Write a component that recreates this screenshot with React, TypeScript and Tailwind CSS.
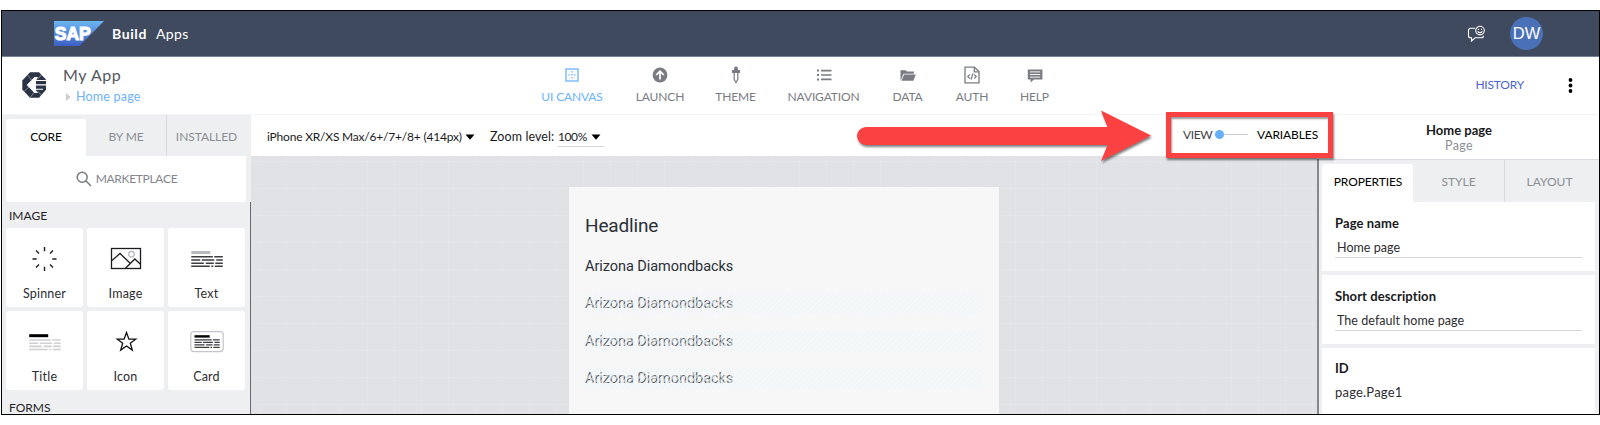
import React from "react";

const navItems = [
  { label: "UI CANVAS", w: "w-[62px]", gap: "ml-0", icon: "canvas", active: true },
  { label: "LAUNCH", w: "w-[48px]", gap: "ml-[33px]", icon: "launch" },
  { label: "THEME", w: "w-[39px]", gap: "ml-[32px]", icon: "theme" },
  { label: "NAVIGATION", w: "w-[71px]", gap: "ml-[33px]", icon: "nav" },
  { label: "DATA", w: "w-[31px]", gap: "ml-[33px]", icon: "data" },
  { label: "AUTH", w: "w-[32px]", gap: "ml-[33px]", icon: "auth" },
  { label: "HELP", w: "w-[29px]", gap: "ml-[32px]", icon: "help" },
];

function NavIcon({ name }: { name: string }) {
  return (
    <svg className="block h-[20px] w-[20px] shrink-0" viewBox="0 0 20 20" fill="none">
      {name === "canvas" && (
        <g stroke="currentColor">
          <rect x="4" y="4" width="12" height="12" strokeWidth="1.3" />
          <path d="M10 6v8.500M6 10h8.500" strokeWidth="1.2" strokeDasharray="1.500 1.500" />
          <path d="M7.500 6.500v7M12.500 6.500v7" strokeWidth=".4" strokeDasharray="1 2" />
        </g>
      )}
      {name === "launch" && (
        <g>
          <circle cx="10" cy="10" r="7.4" fill="currentColor" />
          <path d="M10 14.500V7M6.200 10 10 6.300l3.800 3.700" stroke="#fff" strokeWidth="1.7" />
        </g>
      )}
      {name === "theme" && (
        <g>
          <path d="M8 5V3.500a2 2 0 0 1 4 0V5h2v3H6V5z" fill="currentColor" />
          <path d="M8.200 8v6.500l1.800 3 1.800-3V8" stroke="currentColor" strokeWidth="1.2" />
        </g>
      )}
      {name === "nav" && (
        <path
          fill="currentColor"
          d="M3 4.600h2v2H3zM3 9h2v2H3zM3 13.400h2v2H3zM7 4.800h10.500v1.700H7zM7 9.200h10.500v1.600H7zM7 13.500h10.500v1.700H7z"
        />
      )}
      {name === "data" && (
        <g fill="currentColor">
          <path d="M2.500 5.200h5.200l1.200 1.400h7v2.200H5.600l-2.600 6h-.5z" />
          <path d="M6.200 9.600h11.600l-2.400 6.200H3.400z" />
        </g>
      )}
      {name === "auth" && (
        <g stroke="currentColor" strokeWidth="1.3">
          <path d="M3 2.200h9.500L17 6.600v11.200H3z" />
          <path d="M12.300 2.200v4.600H17" />
          <path d="m7.800 9.300-2 2.200 2 2.200M12.200 9.300l2 2.200-2 2.200M10.900 8.300l-1.800 6.300" strokeWidth="1.200" />
        </g>
      )}
      {name === "help" && (
        <g>
          <path d="M2.800 4.600h14.600v10H9l-3.400 2.800v-2.800H2.800z" fill="currentColor" />
          <path d="M5 6.900h10.200M5 9.500h10.200M5 12.100h10.200" stroke="#fff" strokeWidth=".9" />
        </g>
      )}
    </svg>
  );
}

function TextLines({ title, body }: { title: string; body: string }) {
  return (
    <g>
      <rect x="0" y="0" width="19" height="3" fill={title} />
      <g stroke={body} strokeWidth="1.6">
        <path d="M0 5.800h21.500M23 5.800h8.500" />
        <path d="M0 9h9M10.500 9H23M25 9h6.500" />
        <path d="M0 12.200h12.500M14.500 12.200h8M24 12.200h7.500" />
        <path d="M0 15.300h18.500M20 15.300h2M23.500 15.300h8" />
      </g>
    </g>
  );
}

const components = [
  {
    label: "Spinner",
    icon: (
      <path
        stroke="#1c1c1e"
        strokeWidth="1.4"
        d="M19.500 3v4.200M19.500 22.800V27M7.500 15h4.200M27.300 15h4.200M11 6.500l3 3M28 6.500l-3 3M11 23.500l3-3M28 23.500l-3-3"
      />
    ),
  },
  {
    label: "Image",
    icon: (
      <g stroke="#1c1c1e" strokeWidth="1.3" fill="none">
        <rect x="5.500" y="4.500" width="29" height="20" />
        <circle cx="25.500" cy="10.300" r="2.800" stroke="#b9babd" />
        <path d="m6 16.500 8-7 10.500 10M19.500 24.200l9.300-9.200 5.400 5" />
      </g>
    ),
  },
  {
    label: "Text",
    icon: (
      <g transform="translate(4.3 7)">
        <TextLines title="#b9babd" body="#3d3d40" />
      </g>
    ),
  },
  {
    label: "Title",
    icon: (
      <g transform="translate(4.2 7.2)">
        <TextLines title="#000" body="#cfd0d2" />
      </g>
    ),
  },
  {
    label: "Icon",
    icon: (
      <path
        d="m20.500 5.500 2.400 6.700h6.800l-5.400 4.100 2 6.800-5.800-4.100-5.800 4.100 2-6.800-5.400-4.100h6.800z"
        fill="none"
        stroke="#111"
        strokeWidth="1.3"
      />
    ),
  },
  {
    label: "Card",
    icon: (
      <g>
        <rect x="3.800" y="4.600" width="32.400" height="20" rx="3" fill="none" stroke="#c3c5cb" strokeWidth="1.200" />
        <g transform="translate(7.5 8.2) scale(.8)">
          <TextLines title="#000" body="#3d3d40" />
        </g>
      </g>
    ),
  },
];

const Caret = () => (
  <svg className="block h-[6px] w-[10px]" viewBox="0 0 10 6">
    <path d="M.5.500h9L5 5.800z" fill="#000" />
  </svg>
);

function Header() {
  return (
    <header className="flex h-[46px] shrink-0 items-center border-b border-[#76829a] bg-[#3f4a5f] pl-[52px] pr-[56px] text-white">
      <svg className="block h-[25px] w-[50px]" viewBox="0 0 50 25">
        <defs>
          <linearGradient id="sap" x1="0" y1="0" x2="0" y2="1">
            <stop offset="0" stopColor="#6cb6f3" />
            <stop offset="1" stopColor="#3c5fc4" />
          </linearGradient>
        </defs>
        <path d="M0 0h50L25.500 25H0z" fill="url(#sap)" />
        <text
          x="0.800"
          y="19"
          fill="#fff"
          fontFamily="Liberation Sans"
          fontWeight="700"
          fontSize="19"
          textLength="36"
          lengthAdjust="spacingAndGlyphs"
          stroke="#fff"
          strokeWidth="1.2"
        >
          SAP
        </text>
      </svg>
      <div className="ml-[8px] flex items-center text-[14px]">
        <span className="font-bold tracking-[0.6px]">Build</span>
        <span className="ml-[9px] tracking-[0.4px]">Apps</span>
      </div>
      <svg className="ml-auto block h-[17px] w-[19px]" viewBox="0 0 19 17" fill="none" stroke="#fff" strokeWidth="1.1">
        <path d="M8 3.200H3.500a2 2 0 0 0-2 2v5.600a2 2 0 0 0 2 2h1V16l3.600-3.200h6.400a2 2 0 0 0 2-2" />
        <circle cx="13" cy="5.600" r="4.300" />
        <path d="M10.700 6.300c.8 2 3.800 2 4.600 0" />
        <path d="M11.500 3.700v1.300M14.500 3.700v1.300" />
      </svg>
      <div className="ml-[24px] flex h-[33px] w-[33px] items-center justify-center rounded-full bg-[#4a70b8] font-['Liberation_Sans'] text-[16.500px]">
        DW
      </div>
    </header>
  );
}

function Toolbar() {
  return (
    <div className="flex h-[58px] shrink-0 items-start border-b border-[#f3f3f5] bg-white">
      <svg className="ml-[20px] mt-[15px] block h-[26px] w-[25px]" viewBox="0 0 25 26">
        <path d="M8 .3h9L24 7.500v10.300l-7 7.900H8L.3 17.500v-9z" fill="#2a3446" />
        <path d="M12.500 4.900 16 4.900 14 8.800v9.800l2 2.300h-3.500L4.700 13z" fill="#fff" />
        <path d="M12.500 8.500H25M13.500 12.900H25M13.500 17.300H21" stroke="#fff" strokeWidth="1.100" />
        <path
          d="M5.600 3l4 5M2.200 19.500l4.500-4.500M19.500 2.800l-4 4.500M8.500 25l4-5M19.800 23.500l-4.800-5"
          stroke="#fff"
          strokeWidth=".6"
          strokeOpacity=".7"
        />
      </svg>
      <div className="ml-[16px] w-[478px] pt-[8px]">
        <div className="text-[16px] leading-[20px] tracking-[0.6px] text-[#55575e]">My App</div>
        <div className="mt-[3px] flex items-center">
          <svg className="ml-[3px] block h-[8px] w-[5px]" viewBox="0 0 5 8">
            <path d="M0 0v8l4.500-4z" fill="#c9cbd0" />
          </svg>
          <span className="ml-[5px] text-[12.500px] leading-[18px] tracking-[0.2px] text-[#6cb2fb]">Home page</span>
        </div>
      </div>
      <nav className="flex pt-[8px]">
        {navItems.map((n) => (
          <div
            key={n.label}
            className={`flex flex-col items-center ${n.w} ${n.gap} ${n.active ? "text-[#6cb2fb]" : "text-[#797c83]"}`}
          >
            <NavIcon name={n.icon} />
            <span className="mt-[4px] whitespace-nowrap text-[12px] leading-[16px] tracking-[-0.15px]">{n.label}</span>
          </div>
        ))}
      </nav>
      <span className="ml-auto mt-[20px] text-[12px] leading-[16px] tracking-[-0.2px] text-[#4c63cf]">HISTORY</span>
      <svg className="ml-[44px] mr-[26px] mt-[20px] block h-[17px] w-[5px]" viewBox="0 0 5 17">
        <circle cx="2.500" cy="3" r="1.900" />
        <circle cx="2.500" cy="8.500" r="1.900" />
        <circle cx="2.500" cy="14" r="1.900" />
      </svg>
    </div>
  );
}

function LeftPanel() {
  return (
    <aside className="flex w-[249px] shrink-0 flex-col bg-[#eeeff1]">
      <div className="flex h-[41px] shrink-0 pl-[4px] text-[12px]">
        <div className="mt-[4px] flex w-[80px] items-center justify-center rounded-t-[3px] bg-white pb-[2px] tracking-[-0.1px] text-black">
          CORE
        </div>
        <div className="flex w-[80px] items-center justify-center pt-[2px] tracking-[-0.1px] text-[#8b8e95]">BY ME</div>
        <div className="flex flex-1 items-center justify-center border-l border-[#d8d9dd] pr-[5px] pt-[2px] tracking-[-0.05px] text-[#8b8e95]">
          INSTALLED
        </div>
      </div>
      <div className="ml-[4px] flex h-[46px] w-[240px] shrink-0 items-center justify-center rounded-b-[3px] bg-white pl-[1px] text-[12px] tracking-[-0.3px] text-[#83868d]">
        <svg className="mr-[4px] block h-[16px] w-[16px]" viewBox="0 0 16 16" fill="none" stroke="#777a81" strokeWidth="1.500">
          <circle cx="6.200" cy="6.200" r="5" />
          <path d="m9.800 9.800 5.200 5.200" />
        </svg>
        MARKETPLACE
      </div>
      <div className="flex min-h-0 flex-1 flex-col border-r border-[#666873] pl-[4px]">
        <div className="mt-[5px] h-[21px] shrink-0 pl-[3px] text-[12px] leading-[17px] text-[#232325]">IMAGE</div>
        <div className="grid w-[239px] shrink-0 grid-cols-3 gap-[4px]">
          {components.map((c) => (
            <div key={c.label} className="flex h-[79px] flex-col items-center rounded-[3px] bg-white pt-[16px]">
              <svg className="block h-[30px] w-[40px] shrink-0" viewBox="0 0 40 30">
                {c.icon}
              </svg>
              <span className="mt-[12px] text-[12.500px] leading-[16px] tracking-[0.2px] text-[#2c2c2f]">{c.label}</span>
            </div>
          ))}
        </div>
        <div className="mt-[12px] shrink-0 pl-[3px] text-[12px] leading-[12px] text-[#232325]">FORMS</div>
      </div>
    </aside>
  );
}

function Canvas() {
  return (
    <main className="flex min-w-0 flex-1 flex-col">
      <div className="relative flex h-[41px] shrink-0 items-center bg-white pl-[16px] pt-[3px] text-[12.500px] text-[#1a1a1c]">
        <span className="mr-[4px] w-[194px] whitespace-nowrap text-[12px] tracking-[-0.2px]">iPhone XR/XS Max/6+/7+/8+ (414px)</span>
        <Caret />
        <span className="ml-[15px] mr-[4px] w-[64px] whitespace-nowrap tracking-[0.1px]">Zoom level:</span>
        <div className="flex h-[19px] w-[46px] items-center gap-[5px] border-b border-[#d5d6da]">
          <span className="w-[28px] text-[12px] tracking-[-0.4px]">100%</span>
          <Caret />
        </div>
        <svg className="absolute left-[603px] top-[-7px] h-[60px] w-[302px]" viewBox="0 0 302 60">
          <path
            d="M12 19H253.500L247 2.500l50 25L247 53l6.500-16H12a9 9 0 0 1 0-18z"
            fill="#fc4143"
            className="drop-shadow-[1px_2px_1px_rgba(0,0,0,0.5)]"
          />
        </svg>
        <div className="absolute left-[915px] top-[-3px] flex h-[46px] w-[167px] items-center border-[5px] border-[#fc4143] bg-white pb-[1px] pl-[12px] text-[12px] shadow-[1px_2px_2px_rgba(0,0,0,0.5),inset_1px_2px_2px_rgba(0,0,0,0.4)]">
          <span className="w-[28px] tracking-[-0.4px] text-[#3f4148]">VIEW</span>
          <span className="ml-[4px] h-[9px] w-[9px] rounded-full bg-[#66b0fb]" />
          <span className="h-px w-[24px] bg-[#c9cbd0]" />
          <span className="ml-[9px] tracking-[-0.1px] text-black">VARIABLES</span>
        </div>
      </div>
      <div className="flex min-h-0 flex-1 bg-[#e1e2e6] bg-[repeating-linear-gradient(90deg,transparent_0_8px,#e4e5e8_8px_9px,transparent_9px_27px),repeating-linear-gradient(180deg,transparent_0_5px,#e4e5e8_5px_6px,transparent_6px_27px)] pl-[318px] pt-[31px]">
        <div className="w-[430px] bg-[#f7f7f7] px-[16px] pt-[25px] font-['Roboto'] text-[14.500px] tracking-[-0.05px] text-[#2b3038]">
          <div className="text-[19px] leading-[28px] tracking-[-0.15px]">Headline</div>
          <div className="mt-[16px] leading-[22px]">Arizona Diamondbacks</div>
          <div className="mt-[15px] flex flex-col gap-[16.500px] text-[#41464d]">
            {[0, 1, 2].map((i) => (
              <div key={i} className="relative h-[21px] w-[398px] leading-[21px]">
                Arizona Diamondbacks
                <div className="absolute inset-0 bg-[repeating-linear-gradient(135deg,rgba(238,246,250,0.65)_0_1.5px,rgba(249,249,249,0.15)_2.5px_3.5px,rgba(238,246,250,0.65)_4px)]" />
              </div>
            ))}
          </div>
        </div>
      </div>
    </main>
  );
}

function RightPanel() {
  return (
    <aside className="flex w-[282px] shrink-0 flex-col bg-white">
      <div className="flex h-[44px] shrink-0 flex-col items-center pl-[2px] pt-[7px]">
        <div className="text-[13px] font-bold leading-[16px] text-[#1a1a1c]">Home page</div>
        <div className="text-[12.500px] leading-[16px] tracking-[0.4px] text-[#8b8e95]">Page</div>
      </div>
      <div className="flex min-h-0 flex-1 flex-col border-l-2 border-[#85878f] bg-[#eeeff1]">
        <div className="flex h-[43px] shrink-0 border-t border-[#dadbdf] pl-[3px] text-[12px]">
          <div className="mt-[4px] flex w-[91px] items-center justify-center rounded-t-[3px] bg-white pb-[2px] pl-[1px] tracking-[-0.1px] text-black">
            PROPERTIES
          </div>
          <div className="flex w-[91px] items-center justify-center pt-[2px] text-[#8b8e95]">STYLE</div>
          <div className="flex flex-1 items-center justify-center border-l border-[#d8d9dd] pr-[5px] pt-[2px] text-[#8b8e95]">LAYOUT</div>
        </div>
        <div className="flex min-h-0 flex-1 flex-col gap-[4px] overflow-hidden pl-[3px] pr-[4px]">
          {[
            ["Page name", "Home page"],
            ["Short description", "The default home page"],
          ].map(([k, v]) => (
            <div key={k} className="h-[69px] shrink-0 bg-white px-[13px] pt-[13px]">
              <div className="text-[13px] font-bold leading-[16px] tracking-[0.1px] text-[#1a1a1c]">{k}</div>
              <div className="mt-[4px] h-[23px] border-b border-[#d5d6da] pl-[2px] pt-[5px] text-[12.500px] leading-[16px] tracking-[0.05px] text-[#2c2c2f]">
                {v}
              </div>
            </div>
          ))}
          <div className="flex-1 bg-white px-[13px] pt-[12px]">
            <div className="text-[13px] font-bold leading-[16px] text-[#1a1a1c]">ID</div>
            <div className="mt-[8px] text-[13px] leading-[16px] tracking-[0.2px] text-[#2c2c2f]">page.Page1</div>
          </div>
        </div>
      </div>
    </aside>
  );
}

export default function App() {
  return (
    <div className="h-[425px] w-[1600px] overflow-hidden bg-white pl-px pt-[10px] font-['Lato',sans-serif]">
      <div className="flex h-[405px] w-[1599px] flex-col overflow-hidden border border-black">
        <Header />
        <Toolbar />
        <div className="flex min-h-0 flex-1">
          <LeftPanel />
          <Canvas />
          <RightPanel />
        </div>
      </div>
    </div>
  );
}
